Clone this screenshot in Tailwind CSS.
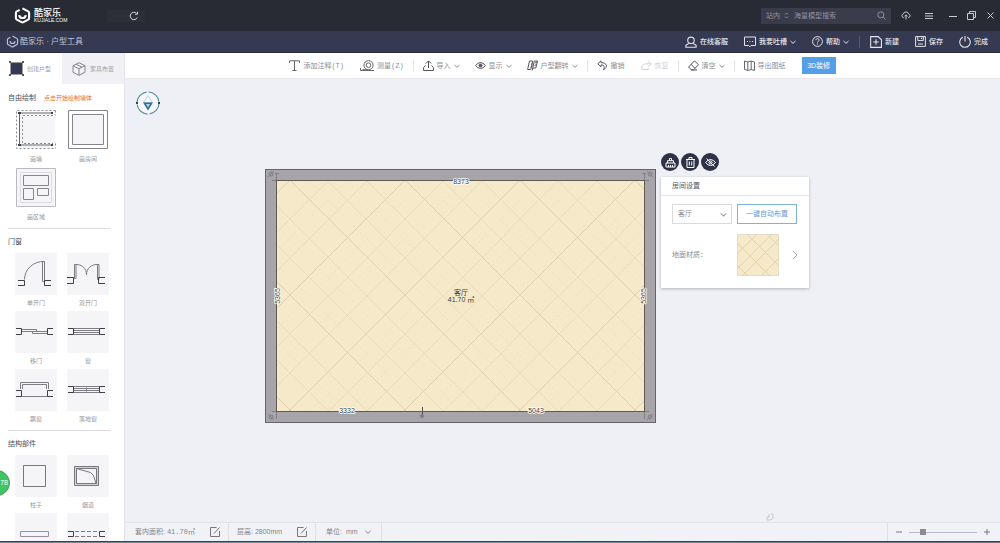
<!DOCTYPE html>
<html lang="zh-CN">
<head>
    <meta charset="UTF-8">
    <meta name="viewport" content="width=device-width, initial-scale=1.0">
    <title>酷家乐 · 户型工具</title>
    <script src="https://cdn.jsdelivr.net/npm/@tailwindcss/browser@4"></script>
</head>
<body class="h-screen overflow-hidden flex flex-col bg-[#eff0f5] font-['Liberation_Sans','Noto_Sans_CJK_SC',sans-serif] text-[7px] leading-4 text-[#8b8b91]">
    <!-- Shared icons -->
    <svg class="hidden">
        <symbol id="logo" viewBox="0 0 18 18"><path d="M9 1.5l6 3.2c.7.4 1 .9 1 1.700v5.200c0 .8-.3 1.300-1 1.700l-5 2.800c-.7.4-1.300.4-2 0l-5-2.800c-.7-.4-1-.9-1-1.700V6.400c0-.8.3-1.300 1-1.700l3-1.600"/><path d="M5.500 8.500c.5 4.300 6.500 4.300 7 0"/></symbol>
        <symbol id="chevron" viewBox="0 0 6 6"><path d="M.5 2L3 4.300 5.500 2"/></symbol>
    </svg>

    <!-- Window bar -->
    <header class="h-[31px] shrink-0 flex items-center bg-[#282a34] text-[#c9cad2] pl-[14px] pr-[6px]">
        <svg class="size-[17px] fill-none stroke-white stroke-[2.2]"><use href="#logo"/></svg>
        <div class="ml-[3px] text-white">
            <p class="text-[9px] leading-[9px] font-medium">酷家乐</p>
            <p class="text-[5px] leading-[5px]">KUJIALE.COM</p>
        </div>
        <nav class="ml-10 flex h-3 bg-[#2c2e38]">
            <button class="w-[22px]" aria-label="后退"></button>
            <button class="w-4 flex items-center" aria-label="刷新">
                <svg class="size-[10px] fill-none stroke-[#d8d9de]" viewBox="0 0 10 10"><path d="M8.300 6.500A3.700 3.700 0 1 1 7.500 2.300M8.500.8v2.400H6"/></svg>
            </button>
        </nav>
        <div class="ml-auto flex items-center h-4 w-[130px] bg-[#3a3c4c] pl-[5px] pr-[5px] text-[#8f919e]">
            <button class="flex items-center gap-1">站内
                <svg class="w-[5px] h-[7px] fill-none stroke-current" viewBox="0 0 5 7"><path d="M1 2.500L2.500 1 4 2.500M1 4.500L2.500 6 4 4.500"/></svg>
            </button>
            <input type="text" aria-label="搜索" placeholder="海量模型搜索" class="ml-[5px] w-0 flex-1 h-4 outline-none placeholder:text-[#8f919e]">
            <svg class="size-[9px] fill-none stroke-current" viewBox="0 0 9 9"><circle cx="3.800" cy="3.800" r="3"/><path d="M6 6l2.600 2.600"/></svg>
        </div>
        <button class="ml-[10px]" aria-label="上传"><svg class="w-[10px] h-[9px] fill-none stroke-current" viewBox="0 0 10 9"><path d="M3 6.500H2.300A1.800 1.800 0 0 1 2.300 3 2.800 2.800 0 0 1 7.700 3a1.800 1.800 0 0 1 0 3.500H7M5 8.500V4M3.500 5.300L5 3.900l1.500 1.400"/></svg></button>
        <button class="ml-[14px]" aria-label="菜单"><svg class="size-2 stroke-current" viewBox="0 0 8 8"><path d="M0 1.500h8M0 4h8M0 6.500h8"/></svg></button>
        <button class="ml-4" aria-label="最小化"><svg class="size-2 stroke-current" viewBox="0 0 8 8"><path d="M0 4.500h8"/></svg></button>
        <button class="ml-[10px]" aria-label="还原"><svg class="size-[9px] fill-none stroke-current" viewBox="0 0 9 9"><path d="M.5 2.500h6v6h-6zM2.500 2.500v-2h6v6h-2"/></svg></button>
        <button class="ml-[11px]" aria-label="关闭"><svg class="size-[7px] stroke-current" viewBox="0 0 7 7"><path d="M.5.5l6 6M6.500.5l-6 6"/></svg></button>
    </header>

    <!-- Application bar -->
    <div class="h-[22px] shrink-0 flex items-center bg-[#353951] border-b border-[#292d43] text-[#e4e5ec] pl-[6px] pr-3">
        <svg class="size-[13px] fill-none stroke-[#bfc3d8] stroke-[1.6]"><use href="#logo"/></svg>
        <h1 class="ml-px text-[8px] text-[#bfc3d8]">酷家乐 · 户型工具</h1>
        <div class="ml-auto flex items-center gap-4 font-medium">
            <button class="flex items-center gap-[3px]">
                <svg class="size-3 fill-none stroke-current" viewBox="0 0 11 11"><circle cx="5.500" cy="4" r="3"/><path d="M3.500 6.800L.8 8.500v1.800h9.400V8.500L7.500 6.800"/></svg>在线客服
            </button>
            <button class="flex items-center gap-[3px]">
                <svg class="size-3 fill-none stroke-current" viewBox="0 0 12 12"><path d="M.5 1h11v8.500H7L5.800 10.800 4.700 9.500H.5zM3 5.500h1M5.500 5.500h1M8 5.500h1"/></svg>我要吐槽
                <svg class="size-[6px] fill-none stroke-current"><use href="#chevron"/></svg>
            </button>
            <button class="flex items-center gap-[3px]">
                <svg class="size-[11px] fill-none stroke-current" viewBox="0 0 11 11"><circle cx="5.500" cy="5.500" r="4.900"/><path d="M3.900 4.300c0-2.200 3.400-2 3.200 0C7 5.200 5.500 5.200 5.500 6.600M5.500 7.500v1"/></svg>帮助
                <svg class="size-[6px] fill-none stroke-current"><use href="#chevron"/></svg>
            </button>
        </div>
        <div class="mx-[10px] w-px h-3 bg-[#555970]"></div>
        <div class="flex items-center gap-4 font-medium">
            <button class="flex items-center gap-[3px]">
                <svg class="size-3 fill-none stroke-current" viewBox="0 0 11 11"><path d="M.6.600h6.900l3 2.900v6.900H.6zM5.500 3v5M3 5.500h5"/></svg>新建
            </button>
            <button class="flex items-center gap-[3px]">
                <svg class="size-[11px] fill-none stroke-current" viewBox="0 0 11 11"><path d="M.6.600h9.800v9.800H.6zM2.800.6v4h5.500v-4M6.600 1.600v1.500M3 8h5"/></svg>保存
            </button>
            <button class="flex items-center gap-[3px]">
                <svg class="size-3 fill-none stroke-current" viewBox="0 0 11 11"><path d="M3.500 1.200a4.800 4.800 0 1 0 4 0M5.500 0v5"/></svg>完成
            </button>
        </div>
    </div>

    <div class="flex-1 min-h-0 flex">
        <!-- Component library -->
        <aside class="relative w-[125px] shrink-0 bg-white border-r border-[#e3e3ea]">
            <div class="h-full overflow-hidden">
            <div class="grid grid-cols-2 h-[31px] text-[6px] text-[#a0a0a5]">
                <button class="flex items-center gap-[3px] pl-[9px]">
                    <svg class="size-[15px]" viewBox="0 0 15 15"><path fill="#343852" stroke="#9b9ba4" d="M1.500 1.500h12v12h-12z"/><path fill="#555763" d="M0 0h2v2H0zM13 0h2v2h-2zM0 13h2v2H0zM13 13h2v2h-2z"/></svg>创建户型
                </button>
                <button class="flex items-center gap-1 pl-[10px] bg-[#f0f0f5]">
                    <svg class="size-[14px] fill-none stroke-[#85858d]" viewBox="0 0 14 14"><path d="M7 .700l6 3v6.600l-6 3-6-3V3.700zM1 3.700l6 3 6-3M7 6.700v6.600M4 2.200l6 3"/></svg>家具布置
                </button>
            </div>

            <!-- Free drawing -->
            <section class="pl-2 pr-[13px] pt-[6px]">
                <div class="flex items-center gap-2 mb-[3px]">
                    <h2 class="text-[#4d4d54]">自由绘制</h2>
                    <a href="#" class="text-[6px] text-[#e0703a]">点击开始绘制墙体</a>
                </div>
                <div class="grid grid-cols-[42px_42px] gap-x-[10px] pl-[7px] text-[6px] text-center text-[#97979c]">
                    <button><svg class="size-[42px] fill-none stroke-[#8c8c93]" viewBox="0 0 42 42"><path fill="#f5f5f8" stroke="none" d="M5 4h35v35H5z"/><path stroke-dasharray="2 2" d="M40.500 1.500h-39v38h39M40.500 1.500v5M38 6.500H7.500v28H38M40.500 34.500v5"/><path stroke="#66666d" d="M38 4H4.500v32H38"/><path fill="#44444a" stroke="none" d="M3 3h3v2H3zM36 3h2v2h-2zM3 35h3v2H3zM36 35h2v2h-2z"/></svg><span class="block">画墙</span></button>
                    <button><svg class="size-[42px] fill-[#f5f5f8] stroke-[#85858b]" viewBox="0 0 42 42"><path fill="#fff" d="M1.500 1.500h39v38h-39z"/><path d="M5.500 5.500h31v30h-31z"/></svg><span class="block">画房间</span></button>
                    <button><svg class="size-[42px] fill-[#f5f5f8] stroke-[#85858b]" viewBox="0 0 42 42"><path stroke="#b9b9bf" d="M1.500 1.500h39v38h-39z"/><path stroke="#dcdce0" d="M5.500 5.500h31v30h-31z"/><path d="M8.500 8.500h25v10h-25zM8.500 21.500h10v11h-10zM22.500 21.500h11v7h-11z"/></svg><span class="block">画区域</span></button>
                </div>
            </section>

            <!-- Doors and windows -->
            <section class="pl-2 pr-[13px]">
                <h2 class="mt-[3px] mb-[3px] pt-[5px] border-t border-[#dcdce2] text-[#4d4d54]">门窗</h2>
                <div class="grid grid-cols-[42px_42px] gap-x-[10px] pl-[7px] text-[6px] text-center text-[#97979c]">
                    <button><svg class="size-[42px] bg-[#f5f5f8] fill-none stroke-[#7d7d83]" viewBox="0 0 42 42"><path d="M9.500 26.500A19 18 0 0 1 29.500 8.500M27.500 8.500h2v20h-2z"/><path stroke="#3f3f45" d="M3 27.500h6.500v5H3M36 27.500h-6.500v5H36"/></svg><span class="block">单开门</span></button>
                    <button><svg class="size-[42px] bg-[#f5f5f8] fill-none stroke-[#7d7d83]" viewBox="0 0 42 42"><path d="M7.500 11.500C15 11 19.500 15 19.500 22c0-7 5-11 12-10.500M7.500 11.500h1.500v14H7.500zM30.500 11.500H32v15h-1.500z"/><path stroke="#3f3f45" d="M0 24.500h6.500v6H0M38 24.500h-6.500v6H38"/></svg><span class="block">双开门</span></button>
                    <button><svg class="size-[42px] bg-[#f5f5f8] fill-none stroke-[#7d7d83]" viewBox="0 0 42 42"><path d="M6.500 18.500h15v2h-15zM17.500 20.500h15v2h-15z"/><path stroke="#3f3f45" d="M1 17.500h5.500v6H1M38 17.500h-5.500v6H38"/></svg><span class="block">移门</span></button>
                    <button><svg class="size-[42px] bg-[#f5f5f8] fill-none stroke-[#7d7d83]" viewBox="0 0 42 42"><path d="M6.500 17.500h26M6.500 19.500h26M6.500 21.500h26M6.500 23.500h26"/><path stroke="#3f3f45" d="M1 17.500h5.500v6H1M38 17.500h-5.500v6H38"/></svg><span class="block">窗</span></button>
                    <button><svg class="size-[42px] bg-[#f5f5f8] fill-none stroke-[#7d7d83]" viewBox="0 0 42 42"><path d="M5.500 20v-6.500h28V20M7.500 20v-4.500h24V20M6.500 27.500h26"/><path stroke="#3f3f45" d="M1 21.500h5.500v6H1M38 21.500h-5.500v6H38"/></svg><span class="block">飘窗</span></button>
                    <button><svg class="size-[42px] bg-[#f5f5f8] fill-none stroke-[#7d7d83]" viewBox="0 0 42 42"><path d="M6.500 17.500h26v6h-26zM6.500 19.500h26M6.500 21.500h26M19.500 18.500v4"/><path stroke="#3f3f45" d="M1 17.500h5.500v6H1M38 17.500h-5.500v6H38"/></svg><span class="block">落地窗</span></button>
                </div>
            </section>

            <!-- Structural parts -->
            <section class="pl-2 pr-[13px]">
                <h2 class="mt-[3px] mb-[3px] pt-[5px] border-t border-[#dcdce2] text-[#4d4d54]">结构部件</h2>
                <div class="grid grid-cols-[42px_42px] gap-x-[10px] pl-[7px] text-[6px] text-center text-[#97979c]">
                    <button><svg class="size-[42px] bg-[#f5f5f8] fill-none stroke-[#77777d]" viewBox="0 0 42 42"><path d="M8.500 10.500h22v21h-22z"/></svg><span class="block">柱子</span></button>
                    <button><svg class="size-[42px] bg-[#f5f5f8] fill-none stroke-[#77777d]" viewBox="0 0 42 42"><path fill="#d2d2d7" d="M7.500 11.500h24v19h-24z"/><path fill="#f5f5f8" d="M9.500 13.500h20v15h-20z"/><path d="M9.500 13.500l14 4 3 3 2.500 8"/></svg><span class="block">烟道</span></button>
                    <button aria-label="梁"><svg class="size-[42px] bg-[#f5f5f8] fill-none stroke-[#9a8f9f]" viewBox="0 0 42 42"><path d="M5.500 18.500h28v5h-28z"/></svg></button>
                    <button aria-label="门洞"><svg class="size-[42px] bg-[#f5f5f8] fill-none stroke-[#7d7d83]" viewBox="0 0 42 42"><path stroke-dasharray="4 2" d="M8 18.500h24M8 23.500h24"/><path stroke="#3f3f45" d="M1 18.500h5.500v5H1M38 18.500h-5.500v5H38"/></svg></button>
                </div>
            </section>
            </div>
            <div class="absolute -left-4 top-[417px] size-[26px] rounded-full border border-[#4a9a5c] bg-[#3fc463] text-white text-right text-[7px] leading-6 pr-px">78</div>
        </aside>

        <div class="flex-1 min-w-0 flex flex-col">
            <!-- Toolbar -->
            <div class="h-[26px] shrink-0 flex items-center justify-center bg-white border-b border-[#e9e9ee] text-[#8e8e93]">
                <div class="flex items-center gap-4">
                    <button class="flex items-center gap-[3px]">
                        <svg class="size-[11px] fill-none stroke-[#66666c]" viewBox="0 0 11 11"><path d="M.5 3V.8h10V3M5.500.8v9.700M3.500 10.500h4"/></svg>
                        <span>添加注释<span class="font-['Liberation_Mono',monospace]">(T)</span></span>
                    </button>
                    <button class="flex items-center gap-[3px]">
                        <svg class="w-[14px] h-[11px] fill-none stroke-[#66666c]" viewBox="0 0 14 11"><circle cx="8.500" cy="5.200" r="4.600"/><circle cx="8.500" cy="5.200" r="2.300"/><path d="M14 10.500H.5V8M3 10.500V9M8.500 9.800H3"/></svg>
                        <span>测量<span class="font-['Liberation_Mono',monospace]">(Z)</span></span>
                    </button>
                </div>
                <div class="mx-[9px] w-px h-3 bg-[#e6e6ea]"></div>
                <div class="flex items-center gap-[15px]">
                    <button class="flex items-center gap-[3px]">
                        <svg class="size-[11px] fill-none stroke-[#55555b]" viewBox="0 0 11 11"><path d="M2.500 5.500L.6 7.500v3h9.800v-3l-1.900-2M5.500 8V1M2.800 3.600L5.500.9l2.700 2.700"/></svg>导入
                        <svg class="size-[6px] fill-none stroke-current"><use href="#chevron"/></svg>
                    </button>
                    <button class="flex items-center gap-[3px]">
                        <svg class="size-[11px] fill-none stroke-[#55555b]" viewBox="0 0 11 11"><path d="M.5 5.500Q5.500-.5 10.500 5.500 5.500 11.500.5 5.500z"/><circle cx="5.500" cy="5.500" r="1.500" fill="#55555b"/></svg>显示
                        <svg class="size-[6px] fill-none stroke-current"><use href="#chevron"/></svg>
                    </button>
                    <button class="flex items-center gap-[3px]">
                        <svg class="size-[11px] fill-none stroke-[#55555b]" viewBox="0 0 11 11"><path d="M2.500 1h3.200L3.800 9.500H.6zM5.200 10.500L7.300 1h3.200L8.800 8H6"/><path d="M4 4.500l2-1M3.500 7l2-1M8 3l2-1M7.500 5.500l2-1"/></svg>户型翻转
                        <svg class="size-[6px] fill-none stroke-current"><use href="#chevron"/></svg>
                    </button>
                </div>
                <div class="mx-[9px] w-px h-3 bg-[#e6e6ea]"></div>
                <div class="flex items-center gap-4">
                    <button class="flex items-center gap-[3px]">
                        <svg class="size-[11px] fill-none stroke-[#55555b]" viewBox="0 0 11 11"><path d="M4 .8L.8 3.800l3.200 3V5c3-.3 4 1.300 2.500 4.700C11 7.500 10.500 2.500 4 2.700z"/></svg>撤销
                    </button>
                    <button class="flex items-center gap-[3px] text-[#d2d2d6]" disabled>
                        <svg class="size-[11px] fill-none stroke-current" viewBox="0 0 11 11"><path d="M7 .8l3.200 3-3.200 3M10 3.800H6C1.500 3.800.5 6 .8 9.500h6.500V8"/></svg>恢复
                    </button>
                </div>
                <div class="mx-[9px] w-px h-3 bg-[#e6e6ea]"></div>
                <button class="flex items-center gap-[3px]">
                    <svg class="size-[11px] fill-none stroke-[#55555b]" viewBox="0 0 11 11"><path d="M6.500.800l4 4-5 5H3.300L.6 7zM3 4.300l4 4M3 10h6"/></svg>清空
                    <svg class="size-[6px] fill-none stroke-current"><use href="#chevron"/></svg>
                </button>
                <div class="mx-[9px] w-px h-3 bg-[#e6e6ea]"></div>
                <button class="flex items-center gap-[3px]">
                    <svg class="size-[11px] fill-none stroke-[#66666c]" viewBox="0 0 11 11"><path d="M.5 1l3.300 1L7.200 1l3.300 1v8.500l-3.300-1-3.400 1-3.300-1zM3.800 2v8.500M7.200 1v8.500"/></svg>导出图纸
                </button>
                <button class="ml-4 w-[34px] h-[17px] bg-[#559ee8] text-white">3D装修</button>
            </div>

            <!-- Drawing canvas -->
            <main class="relative flex-1 min-h-0 overflow-hidden">
                <svg class="absolute left-[11px] top-3 size-6" viewBox="0 0 24 24"><circle cx="12" cy="12" r="11" fill="#f7f8fb" stroke="#5f8ea0" stroke-width="1.200" stroke-dasharray="15.500 1.800"/><path fill="#f4f6f9" stroke="#9fb8c8" stroke-width=".6" d="M12 4.500l4.500 7h-9z"/><path fill="#2c6f9e" d="M7 11.500h10L12 19.500z"/><path fill="#b7d3e5" d="M10 13h4l-2 3.500z"/><path fill="#37434e" d="M0 11h2v2H0zM22 11h2v2h-2z"/></svg>

                <!-- Room -->
                <svg class="absolute left-[140px] top-[90px] w-[391px] h-[254px] font-['Liberation_Sans','Noto_Sans_CJK_SC',sans-serif]" viewBox="0 0 391 254">
                    <defs>
                        <pattern id="floor" x="12" y="11" width="115" height="115" patternUnits="userSpaceOnUse">
                            <rect width="115" height="115" fill="#f5e9ca"/>
                            <g fill="none" stroke="#d5c6a3">
                                <path stroke-width=".7" d="M12-1l104 104M-1 101l15 15M129-1L-1 129M14-1L-1 14"/>
                                <path stroke-width=".5" stroke-opacity=".7" d="M49-1l67 67M-1 64l52 52M88-1l28 28M-1 25l91 91M53-1L-1 53M116 52l-64 64M92-1L-1 92M116 90l-26 26"/>
                                <path stroke-width=".5" stroke-opacity=".5" stroke-dasharray="2 3" d="M30-1l86 86M-1 84l32 32M68-1l48 48M-1 46l70 70M72-1L-1 72M116 70l-46 46M34-1L-1 34M116 33l-83 83"/>
                            </g>
                        </pattern>
                    </defs>
                    <rect x=".5" y=".5" width="390" height="253" fill="#a7a5aa" stroke="#66656a"/>
                    <rect x="11.500" y="11.500" width="368" height="231" fill="url(#floor)" stroke="#615b50"/>
                    <g fill="none" stroke="#807f86">
                        <circle cx="6" cy="5" r="2"/><path d="M3 8l6-6M7 11.500h4M11.500 4v7M10 4.500h4"/>
                        <circle cx="385" cy="5" r="2"/><path d="M388 8l-6-6M380 11.500h4M379.500 4v7M377 4.500h4"/>
                        <circle cx="6" cy="248" r="2"/><path d="M3 245l6 6M7 242.500h4M11.500 243v7"/>
                        <circle cx="385" cy="248" r="2"/><path d="M388 245l-6 6M380 242.500h4M379.500 243v7"/>
                    </g>
                    <path stroke="#55545a" d="M157.500 238v9"/><circle cx="157" cy="247" r="2" fill="#807f86"/>
                    <g class="text-[7px]" text-anchor="middle" fill="#3e3e42" stroke="#fff" stroke-width="1.500" paint-order="stroke">
                        <text x="196" y="15">8373</text>
                        <text x="82" y="244">3332</text>
                        <text x="271" y="244">5043</text>
                        <text x="0" y="0" transform="translate(15 127) rotate(-90)">5365</text>
                        <text x="0" y="0" transform="translate(381 127) rotate(-90)">5365</text>
                        <text x="196" y="126" stroke="none">客厅</text>
                        <text x="196" y="133" stroke="none">41.70 ㎡</text>
                    </g>
                </svg>

                <!-- Room actions and settings -->
                <div class="absolute left-[536px] top-[74px] flex gap-[2px] text-white">
                    <button aria-label="清理" class="size-[18px] rounded-full bg-[#2e3247] flex items-center justify-center"><svg class="size-[11px] fill-none stroke-current" viewBox="0 0 11 11"><path d="M4.500 3.500v-2h2v2M2.500 6V3.700h6V6M1 6h9v4H1zM3.500 8v2M5.500 8v2M7.500 8v2"/></svg></button>
                    <button aria-label="删除" class="size-[18px] rounded-full bg-[#2e3247] flex items-center justify-center"><svg class="size-[11px] fill-none stroke-current" viewBox="0 0 11 11"><path d="M1 2.500h9M4 2.500v-2h3v2M2 2.500v8h7v-8M4.300 4.500v4M6.700 4.500v4"/></svg></button>
                    <button aria-label="隐藏" class="size-[18px] rounded-full bg-[#2e3247] flex items-center justify-center"><svg class="size-[11px] fill-none stroke-current" viewBox="0 0 11 11"><path d="M.5 5.500Q5.500-.5 10.500 5.500 5.500 11.500.5 5.500zM1.500 1.500l8 8"/><circle cx="5.500" cy="5.500" r="1.500"/></svg></button>
                </div>
                <form class="absolute left-[536px] top-[98px] w-[148px] bg-white shadow-[0_1px_3px_rgba(0,0,0,0.25)]">
                    <h2 class="px-[11px] leading-[18px] border-b border-[#e4e4e9] text-[#55555b]">房间设置</h2>
                    <div class="flex gap-[5px] px-[11px] pt-2">
                        <div class="relative w-[60px]">
                            <select aria-label="房间类型" class="appearance-none block w-full h-5 pl-[5px] border border-[#d9d9de] text-[#85858b]"><option>客厅</option><option>卧室</option></select>
                            <svg class="absolute right-[5px] top-[7px] size-[7px] fill-none stroke-[#a0a0a6] pointer-events-none"><use href="#chevron"/></svg>
                        </div>
                        <button type="button" class="w-[60px] h-5 border border-[#7fb0de] text-[#6f97cf]">一键自动布置</button>
                    </div>
                    <div class="flex items-center px-[11px] pt-[10px] pb-3">
                        <span class="w-[65px]">地面材质：</span>
                        <button type="button" aria-label="地面材质" class="size-[42px]">
                            <svg class="size-full" viewBox="0 0 42 42"><path fill="#f5e9ca" stroke="#e5dcc4" d="M.5.5h41v41H.5z"/><path fill="none" stroke="#dccb9f" stroke-width=".7" d="M0 9l33 33M10 0l32 32M30 0l12 12M0 31l11 11M20 0L0 20M42 5L5 42M42 24L24 42M35 0L0 35"/></svg>
                        </button>
                        <svg class="ml-auto w-[6px] h-[10px] fill-none stroke-[#b0b0b6]" viewBox="0 0 6 10"><path d="M1 1l4 4-4 4"/></svg>
                    </div>
                </form>
                <svg class="absolute left-[641px] bottom-[1px] size-2 fill-none stroke-[#c6c7cd]" viewBox="0 0 8 8"><path d="M3 1v3H1v3h4l2-2V1H5"/></svg>
            </main>

            <!-- Status bar -->
            <footer class="h-[19px] shrink-0 flex items-center border-t border-[#e2e3e8] bg-[#f1f2f6] text-[#85858a]">
                <div class="w-[104px] h-full flex items-center justify-between pl-[10px] pr-2 border-r border-[#dfe0e5]">
                    <span>套内面积: <span class="font-['Liberation_Mono',monospace]">41.70</span>㎡</span>
                    <button aria-label="编辑面积"><svg class="size-[10px] fill-none stroke-[#77777d]" viewBox="0 0 10 10"><path d="M6.500.5h-6v9h9V4M4 6.500L9.500.5"/></svg></button>
                </div>
                <div class="w-[87px] h-full flex items-center justify-between pl-2 pr-2 border-r border-[#dfe0e5]">
                    <span>层高: 2800mm</span>
                    <button aria-label="编辑层高"><svg class="size-[10px] fill-none stroke-[#77777d]" viewBox="0 0 10 10"><path d="M6.500.5h-6v9h9V4M4 6.500L9.500.5"/></svg></button>
                </div>
                <div class="relative w-[66px] h-full flex items-center pl-[10px] border-r border-[#dfe0e5]">
                    <label for="unit">单位:</label>
                    <select id="unit" class="appearance-none flex-1 pl-1 outline-none"><option>mm</option><option>cm</option></select>
                    <svg class="absolute right-[10px] top-[6px] size-[6px] fill-none stroke-current pointer-events-none"><use href="#chevron"/></svg>
                </div>
                <div class="ml-auto h-full flex items-center gap-[7px] pl-2 pr-[10px] border-l border-[#dfe0e5]">
                    <button aria-label="缩小"><svg class="size-[6px] stroke-[#77777d]" viewBox="0 0 6 6"><path d="M0 3h6"/></svg></button>
                    <input type="range" aria-label="缩放" min="0" max="100" value="18" class="appearance-none w-[68px] h-px bg-[#b9b9be] [&::-webkit-slider-thumb]:appearance-none [&::-webkit-slider-thumb]:size-[6px] [&::-webkit-slider-thumb]:bg-[#8b8b90]">
                    <button aria-label="放大"><svg class="size-[6px] stroke-[#77777d]" viewBox="0 0 6 6"><path d="M0 3h6M3 0v6"/></svg></button>
                </div>
            </footer>
        </div>
    </div>
    <div class="h-[2px] shrink-0 border-t border-[#344259] bg-linear-to-r from-[#76869a] via-[#6d9aa8] to-[#697184]"></div>
</body>
</html>
